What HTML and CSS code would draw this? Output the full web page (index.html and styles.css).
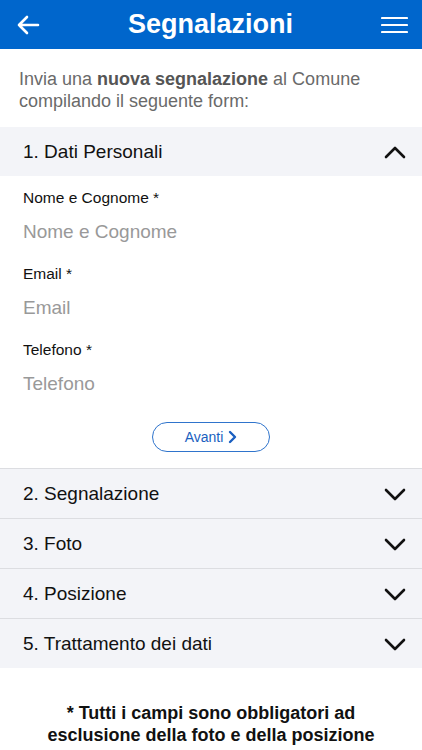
FILE: index.html
```html
<!DOCTYPE html>
<html lang="it">
<head>
    <meta charset="UTF-8">
    <meta name="viewport" content="width=device-width, initial-scale=1.0">
    <title>Segnalazioni</title>
    <link rel="stylesheet" href="styles.css">
</head>
<body>
    <header class="topbar">
        <button class="icon-btn" aria-label="Indietro">
            <svg width="24" height="20" viewBox="0 0 24 20"><path d="M22 10H3M11 2L3 10l8 8" fill="none" stroke="#fff" stroke-width="2.6" stroke-linecap="round" stroke-linejoin="round"/></svg>
        </button>
        <h1>Segnalazioni</h1>
        <button class="icon-btn" aria-label="Menu">
            <svg width="27" height="18" viewBox="0 0 27 18"><path d="M1 2h25M1 9h25M1 16h25" fill="none" stroke="#fff" stroke-width="2.2" stroke-linecap="round"/></svg>
        </button>
    </header>

    <p class="intro">Invia una <strong>nuova segnalazione</strong> al Comune compilando il seguente form:</p>

    <section class="step open">
        <div class="step-head">
            <span>1. Dati Personali</span>
            <svg width="22" height="14" viewBox="0 0 22 14"><path d="M2 12L11 3l9 9" fill="none" stroke="#111" stroke-width="2.6" stroke-linecap="round" stroke-linejoin="round"/></svg>
        </div>
        <div class="step-body">
            <div class="field">
                <label for="nome">Nome e Cognome *</label>
                <input type="text" id="nome" placeholder="Nome e Cognome">
            </div>
            <div class="field">
                <label for="email">Email *</label>
                <input type="email" id="email" placeholder="Email">
            </div>
            <div class="field">
                <label for="tel">Telefono *</label>
                <input type="tel" id="tel" placeholder="Telefono">
            </div>
            <div class="actions">
                <button class="next-btn">Avanti
                    <svg width="9" height="14" viewBox="0 0 9 14"><path d="M2 2l5 5-5 5" fill="none" stroke="#1a5fc0" stroke-width="2.4" stroke-linecap="round" stroke-linejoin="round"/></svg>
                </button>
            </div>
        </div>
    </section>

    <section class="step">
        <div class="step-head">
            <span>2. Segnalazione</span>
            <svg width="22" height="14" viewBox="0 0 22 14"><path d="M2 3l9 9 9-9" fill="none" stroke="#111" stroke-width="2.6" stroke-linecap="round" stroke-linejoin="round"/></svg>
        </div>
    </section>
    <section class="step">
        <div class="step-head">
            <span>3. Foto</span>
            <svg width="22" height="14" viewBox="0 0 22 14"><path d="M2 3l9 9 9-9" fill="none" stroke="#111" stroke-width="2.6" stroke-linecap="round" stroke-linejoin="round"/></svg>
        </div>
    </section>
    <section class="step">
        <div class="step-head">
            <span>4. Posizione</span>
            <svg width="22" height="14" viewBox="0 0 22 14"><path d="M2 3l9 9 9-9" fill="none" stroke="#111" stroke-width="2.6" stroke-linecap="round" stroke-linejoin="round"/></svg>
        </div>
    </section>
    <section class="step">
        <div class="step-head">
            <span>5. Trattamento dei dati</span>
            <svg width="22" height="14" viewBox="0 0 22 14"><path d="M2 3l9 9 9-9" fill="none" stroke="#111" stroke-width="2.6" stroke-linecap="round" stroke-linejoin="round"/></svg>
        </div>
    </section>

    <p class="note">* Tutti i campi sono obbligatori ad esclusione della foto e della posizione</p>
</body>
</html>
```

FILE: styles.css
```css
body {
    margin: 0;
    font-family: "Liberation Sans", Arial, sans-serif;
    background-color: #fff;
    color: #111;
}
.topbar {
    height: 49px;
    background-color: #0066cc;
    display: flex;
    align-items: center;
    justify-content: space-between;
    padding: 0 14px 0 16px;
}
.topbar h1 {
    margin: 0;
    color: #fff;
    font-size: 27px;
    font-weight: bold;
}
.icon-btn {
    background: none;
    border: none;
    padding: 0;
    display: flex;
    align-items: center;
    cursor: pointer;
}
.intro {
    margin: 0;
    padding: 19px 19px 15px;
    font-size: 18px;
    line-height: 22px;
    color: #6a6a6a;
}
.intro strong {
    color: #555;
}
.step {
    border-top: 1px solid #dcdde1;
}
.step.open {
    border-top: none;
}
.step-head {
    height: 49px;
    background-color: #f3f4f8;
    display: flex;
    align-items: center;
    justify-content: space-between;
    padding: 0 16px 0 23px;
    font-size: 19px;
}
.step-body {
    padding: 11px 23px 16px;
}
.field {
    margin-bottom: 13px;
}
.field label {
    display: block;
    font-size: 15.5px;
    line-height: 22px;
    margin-bottom: 5px;
}
.field input {
    display: block;
    width: 100%;
    height: 36px;
    border: none;
    padding: 0;
    font-family: inherit;
    font-size: 19px;
    color: #111;
    background: transparent;
    outline: none;
}
.field input::placeholder {
    color: #999;
}
.actions {
    display: flex;
    justify-content: center;
    margin-top: 20px;
}
.next-btn {
    width: 118px;
    height: 30px;
    border: 1px solid #2f74cc;
    border-radius: 15px;
    background: #fff;
    color: #1a5fc0;
    font-family: inherit;
    font-size: 14px;
    display: flex;
    align-items: center;
    justify-content: center;
    gap: 5px;
    cursor: pointer;
}
.note {
    margin: 0;
    padding: 34px 30px 10px;
    text-align: center;
    font-size: 18px;
    line-height: 22px;
    font-weight: bold;
}
```
